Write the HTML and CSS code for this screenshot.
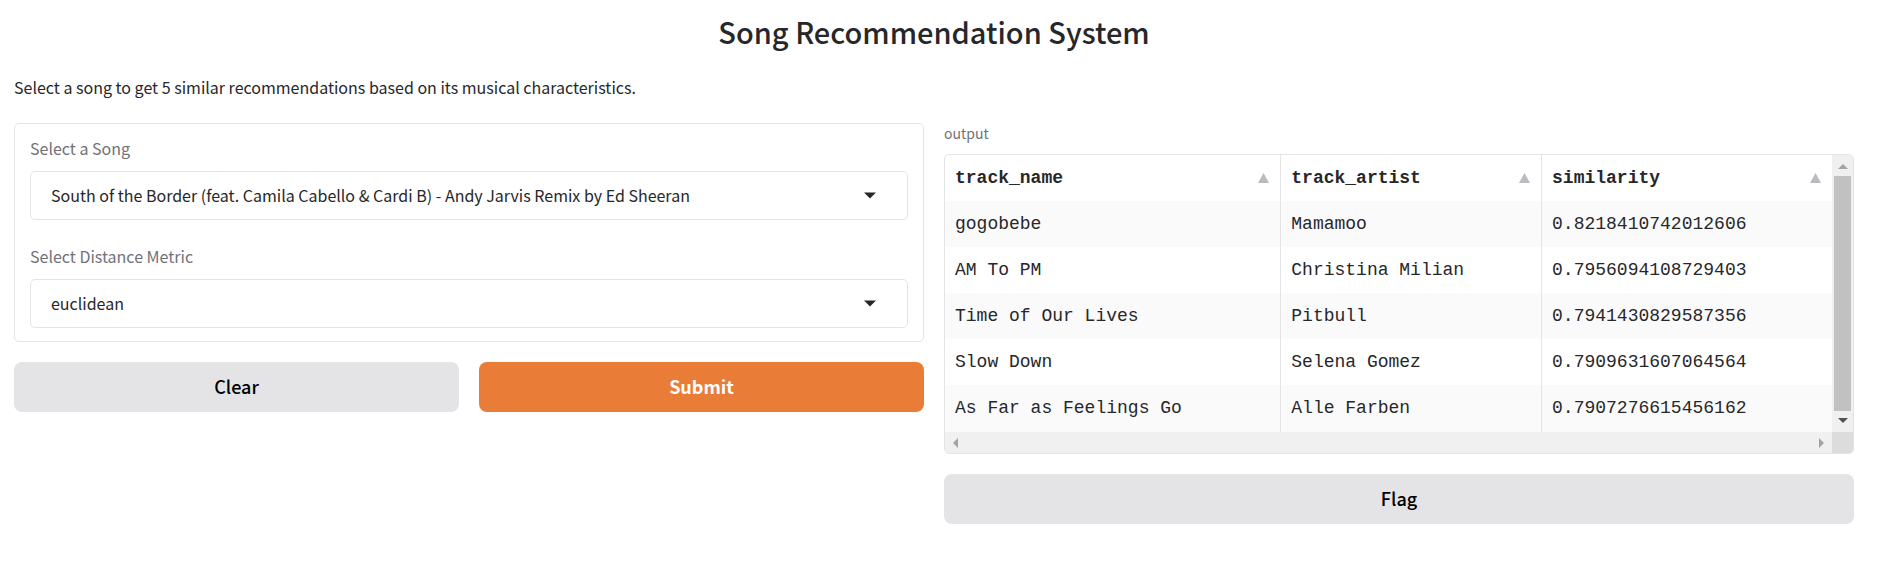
FILE: index.html
```html
<!DOCTYPE html>
<html lang="en">
<head>
<meta charset="utf-8">
<title>Song Recommendation System</title>
<link rel="stylesheet" href="styles.css">
</head>
<body>
<main class="app">
  <h1 class="title">Song Recommendation System</h1>
  <p class="intro">Select a song to get 5 similar recommendations based on its musical characteristics.</p>
  <div class="columns">
    <section class="column">
      <form class="panel" id="query">
        <div class="field">
          <label class="label" for="song">Select a Song</label>
          <div class="dropdown">
            <select class="select" id="song"><option>South of the Border (feat. Camila Cabello &amp; Cardi B) - Andy Jarvis Remix by Ed Sheeran</option></select>
            <svg class="caret" viewBox="0 0 12 7" aria-hidden="true"><path d="M0 0.5h12L6 6.5z"/></svg>
          </div>
        </div>
        <div class="field">
          <label class="label" for="metric">Select Distance Metric</label>
          <div class="dropdown">
            <select class="select" id="metric"><option>euclidean</option></select>
            <svg class="caret" viewBox="0 0 12 7" aria-hidden="true"><path d="M0 0.5h12L6 6.5z"/></svg>
          </div>
        </div>
      </form>
      <div class="actions">
        <button class="button" type="reset" form="query">Clear</button>
        <button class="button primary" type="submit" form="query">Submit</button>
      </div>
    </section>
    <section class="column">
      <div class="output">
        <p class="output-label" id="output-label">output</p>
        <div class="table-box">
          <table class="table" aria-labelledby="output-label">
            <colgroup><col class="col-name"><col class="col-artist"><col class="col-similarity"></colgroup>
            <thead>
              <tr>
                <th scope="col"><div class="head">track_name<svg class="sort" viewBox="0 0 11 10" aria-hidden="true"><path d="M5.500 0L11 10H0z"/></svg></div></th>
                <th scope="col"><div class="head">track_artist<svg class="sort" viewBox="0 0 11 10" aria-hidden="true"><path d="M5.500 0L11 10H0z"/></svg></div></th>
                <th scope="col"><div class="head">similarity<svg class="sort" viewBox="0 0 11 10" aria-hidden="true"><path d="M5.500 0L11 10H0z"/></svg></div></th>
              </tr>
            </thead>
            <tbody>
              <tr><td>gogobebe</td><td>Mamamoo</td><td>0.8218410742012606</td></tr>
              <tr><td>AM To PM</td><td>Christina Milian</td><td>0.7956094108729403</td></tr>
              <tr><td>Time of Our Lives</td><td>Pitbull</td><td>0.7941430829587356</td></tr>
              <tr><td>Slow Down</td><td>Selena Gomez</td><td>0.7909631607064564</td></tr>
              <tr><td>As Far as Feelings Go</td><td>Alle Farben</td><td>0.7907276615456162</td></tr>
            </tbody>
          </table>
          <div class="scroll vertical" aria-hidden="true">
            <svg class="arrow-v" viewBox="0 0 10 5"><path d="M5 0l5 5H0z"/></svg>
            <div class="thumb"></div>
            <svg class="arrow-v active" viewBox="0 0 10 5"><path d="M0 0h10L5 5z"/></svg>
          </div>
          <div class="scroll horizontal" aria-hidden="true">
            <svg class="arrow-h" viewBox="0 0 5 10"><path d="M5 0v10L0 5z"/></svg>
            <svg class="arrow-h" viewBox="0 0 5 10"><path d="M0 0l5 5-5 5z"/></svg>
          </div>
          <div class="corner"></div>
        </div>
      </div>
      <button class="button" type="button">Flag</button>
    </section>
  </div>
</main>
</body>
</html>
```
FILE: styles.css
```css
* {
  box-sizing: border-box;
}

body {
  margin: 0;
  background: #fff;
  color: #27272a;
  font-family: "Noto Sans CJK SC", "Noto Sans", sans-serif;
  font-size: 16px;
  line-height: 24px;
}

.app {
  padding: 10px 33px 32px 14px;
}

.title {
  margin: 0;
  font-size: 29px;
  font-weight: 500;
  line-height: 42px;
  text-align: center;
}

.intro {
  margin: 23px 0 24px;
}

.columns {
  display: grid;
  grid-template-columns: 1fr 1fr;
  gap: 20px;
  align-items: start;
}

.column {
  display: grid;
  gap: 20px;
}

.panel {
  display: grid;
  gap: 24px;
  padding: 12px 15px 13px;
  border: 1px solid #e4e4e7;
  border-radius: 5px;
}

.label {
  display: block;
  margin-bottom: 11px;
  color: #71717a;
}

.dropdown {
  display: grid;
  align-items: center;
}

.select,
.caret {
  grid-area: 1 / 1;
}

.select {
  width: 100%;
  height: 49px;
  padding: 0 56px 2px 20px;
  appearance: none;
  border: 1px solid #e4e4e7;
  border-radius: 5px;
  background: #fff;
  color: inherit;
  font: inherit;
}

.caret {
  justify-self: end;
  width: 12px;
  height: 7px;
  margin-right: 32px;
  fill: #27272a;
  pointer-events: none;
}

.actions {
  display: grid;
  grid-template-columns: 1fr 1fr;
  gap: 20px;
}

.button {
  height: 50px;
  padding: 0 12px 2px;
  border: 0;
  border-radius: 8px;
  background: #e4e4e7;
  color: #000;
  font: inherit;
  font-size: 18px;
  font-weight: 500;
}

.primary {
  background: #e97c36;
  color: #fff;
  font-weight: 700;
}

.output-label {
  margin: 0 0 10px;
  color: #71717a;
  font-size: 14px;
  line-height: 21px;
}

.table-box {
  display: grid;
  grid-template-columns: 1fr 21px;
  grid-template-rows: auto 21px;
  overflow: hidden;
  border: 1px solid #e4e4e7;
  border-radius: 5px;
}

.table {
  width: 100%;
  table-layout: fixed;
  border-collapse: separate;
  border-spacing: 0;
  font-family: "Liberation Mono", monospace;
  font-size: 18px;
}

.col-name {
  width: 37.8%;
}

.col-artist {
  width: 29.4%;
}

.col-similarity {
  width: 32.8%;
}

.table th,
.table td {
  height: 46px;
  padding: 0 11px 1px 10px;
  text-align: left;
  white-space: nowrap;
}

.table tr:last-child td {
  height: 47px;
}

.table th + th,
.table td + td {
  border-left: 1px solid #e4e4e7;
}

.table tbody tr:nth-child(odd) {
  background: #fafafa;
}

.head {
  display: flex;
  align-items: center;
  justify-content: space-between;
}

.sort {
  width: 11px;
  height: 10px;
  fill: #bbbbc2;
}

.scroll {
  display: flex;
  align-items: center;
  justify-content: space-between;
  background: #f0f0f0;
  fill: #a3a3a3;
}

.vertical {
  flex-direction: column;
  gap: 7px;
  padding: 9px 2px;
}

.horizontal {
  padding: 0 8px;
}

.thumb {
  flex: 1;
  width: 100%;
  background: #c1c1c1;
}

.arrow-v {
  width: 10px;
  height: 5px;
}

.arrow-h {
  width: 5px;
  height: 10px;
}

.active {
  fill: #505050;
}

.corner {
  background: #dcdcdc;
}
```
